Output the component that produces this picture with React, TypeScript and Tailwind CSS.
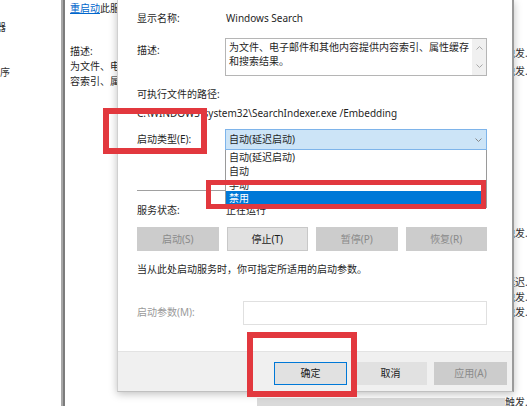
import React from 'react';

const font = "font-['Noto_Sans','Noto_Sans_CJK_SC',sans-serif]";

const rightRows = [
    { mt: 'mt-[46px]', text: '触发...' },
    { mt: 'mt-[3px]', text: '触发...' },
    { mt: 'mt-[147px]', text: '触发...' },
    { mt: 'mt-[34px]', text: '延迟...' },
    { mt: 'mt-0', text: '触发...' },
    { mt: 'mt-0', text: '触发...' },
    { mt: 'mt-[75px]', text: '触发...' },
];

function Chevron({ up = false, color = '#555' }: { up?: boolean; color?: string }) {
    return (
        <svg width="7" height="4" viewBox="0 0 7 4" className="block">
            <path d={up ? 'M0.5 3.5 L3.5 0.5 L6.5 3.5' : 'M0.5 0.5 L3.5 3.5 L6.5 0.5'} fill="none" stroke={color} strokeWidth="1" />
        </svg>
    );
}

function WinButton({ label, disabled = false, primary = false, className = '' }: { label: string; disabled?: boolean; primary?: boolean; className?: string }) {
    return (
        <div
            className={`flex items-center justify-center border text-[10px] ${
                disabled
                    ? 'bg-[#cccccc] border-[#cccccc] text-[#8a8a8a]'
                    : primary
                    ? 'bg-[#e1e1e1] border-[#0078d7] text-[#1a1a1a]'
                    : 'bg-[#e1e1e1] border-[#c8c8c8] text-[#1a1a1a]'
            } ${className}`}
        >
            {label}
        </div>
    );
}

export default function App() {
    return (
        <div className={`relative w-[527px] h-[406px] overflow-hidden bg-white text-[#1f1f1f] text-[10px] ${font}`}>
            {/* Background: services window */}
            <div className="flex h-full w-full">
                {/* left tree column */}
                <div className="w-[61px] shrink-0 overflow-hidden flex flex-col">
                    <div className="mt-[19px] h-[16px] leading-[16px] -ml-[24px] whitespace-nowrap text-[#333]">管理器</div>
                    <div className="mt-[29px] h-[16px] leading-[16px] -ml-[10px] whitespace-nowrap text-[#333]">程序</div>
                </div>
                {/* splitter */}
                <div className="w-[4px] shrink-0 flex">
                    <div className="w-[2px] bg-[#a8a8a8]" />
                    <div className="w-[2px] bg-[#7c7c7c]" />
                </div>
                {/* description panel */}
                <div className="w-[135px] shrink-0 pl-[5px] flex flex-col whitespace-nowrap">
                    <div className="h-[16px] leading-[16px]">
                        <span className="text-[#0066cc] underline">重启动</span>此服务
                    </div>
                    <div className="mt-[28px] h-[15px] leading-[15px]">描述:</div>
                    <div className="h-[15px] leading-[15px]">为文件、电子邮件和其他内容</div>
                    <div className="h-[14px] leading-[14px]">容索引、属性缓存和搜索结果。</div>
                </div>
                {/* list area */}
                <div className="w-[305px] shrink-0 flex flex-col">
                    <div className="flex-1" />
                    <div className="h-[8px] ml-[57px] bg-[#dadada]" />
                </div>
                {/* startup type column edge */}
                <div className="flex-1 flex flex-col whitespace-nowrap text-[#333]">
                    {rightRows.map((r, i) => (
                        <div key={i} className={`${r.mt} h-[15px] leading-[15px]`}>{r.text}</div>
                    ))}
                </div>
            </div>

            {/* Properties dialog */}
            <div className="absolute left-[117px] top-0 w-[397px] h-[392px] border-l border-r-2 border-b border-l-[#d0d0d0] border-r-[#9a9a9a] border-b-[#c0c0c0] shadow-[0_2px_8px_rgba(0,0,0,0.25)] flex flex-col bg-white">
                <div className="h-[352px] pl-[19px] flex flex-col border-b border-[#e3e3e3]">
                    <div className="w-[350px] flex flex-col">
                        {/* display name */}
                        <div className="mt-[8px] h-[20px] leading-[20px] flex">
                            <div className="w-[89px]">显示名称:</div>
                            <div>Windows Search</div>
                        </div>
                        {/* description */}
                        <div className="mt-[10px] h-[38px] flex">
                            <div className="w-[88px] pt-[2px] leading-[20px]">描述:</div>
                            <div className="flex-1 flex border border-[#b5b5b5]">
                                <div className="flex-1 pl-[3px] pt-[1px] leading-[14px]">
                                    为文件、电子邮件和其他内容提供内容索引、属性缓存
                                    <br />
                                    和搜索结果。
                                </div>
                                <div className="w-[14px] bg-[#f0f0f0] flex flex-col items-center justify-between py-[7px]">
                                    <Chevron up color="#a8a8a8" />
                                    <Chevron color="#a8a8a8" />
                                </div>
                            </div>
                        </div>
                        {/* path */}
                        <div className="mt-[9px] h-[18px] leading-[18px]">可执行文件的路径:</div>
                        <div className="h-[20px] leading-[20px] whitespace-nowrap">C:\WINDOWS\system32\SearchIndexer.exe /Embedding</div>
                        {/* startup type */}
                        <div className="mt-[6px] h-[21px] flex">
                            <div className="w-[88px] leading-[21px]">启动类型(E):</div>
                            <div className="flex-1 flex items-center justify-between border border-[#7eb4ea] bg-[#cce4f7] pl-[3px] pr-[4px]">
                                <span className="leading-[19px]">自动(延迟启动)</span>
                                <Chevron color="#888" />
                            </div>
                        </div>
                        {/* separator */}
                        <div className="mt-[40px] h-px bg-[#a0a0a0]" />
                        {/* status */}
                        <div className="mt-[9px] h-[20px] leading-[20px] flex">
                            <div className="w-[89px]">服务状态:</div>
                            <div>正在运行</div>
                        </div>
                        {/* service buttons */}
                        <div className="mt-[7px] h-[24px] grid grid-cols-4 gap-x-[8px]">
                            <WinButton label="启动(S)" disabled />
                            <WinButton label="停止(T)" />
                            <WinButton label="暂停(P)" disabled />
                            <WinButton label="恢复(R)" disabled />
                        </div>
                        <div className="mt-[8px] h-[20px] leading-[20px]">当从此处启动服务时，你可指定所适用的启动参数。</div>
                        {/* start params */}
                        <div className="mt-[22px] h-[24px] flex">
                            <div className="w-[106px] leading-[22px] text-[#9a9a9a]">启动参数(M):</div>
                            <div className="flex-1 border border-[#e0e0e0] bg-white" />
                        </div>
                    </div>
                </div>
                {/* footer */}
                <div className="flex-1 bg-[#f0f0f0] flex justify-end gap-[7px] pt-[10px] pr-[5px]">
                    <WinButton label="确定" primary className="w-[73px] h-[23px]" />
                    <WinButton label="取消" className="w-[73px] h-[23px] border-[#e1e1e1]" />
                    <WinButton label="应用(A)" disabled className="w-[73px] h-[23px]" />
                </div>

                {/* open dropdown list */}
                <div className="absolute left-[107px] top-[150px] w-[262px] h-[58px] bg-white border border-[#9a9a9a] border-t-0 flex flex-col">
                    <div className="h-[14px] leading-[14px] pl-[3px]">自动(延迟启动)</div>
                    <div className="h-[14px] leading-[14px] pl-[3px]">自动</div>
                    <div className="h-[13px] leading-[14px] pl-[3px]">手动</div>
                    <div className="h-[14px] leading-[14px] pl-[3px] bg-[#0078d7] text-white">禁用</div>
                </div>
            </div>

            {/* Red annotation boxes */}
            <div className="absolute left-[103px] top-[108px] w-[104px] h-[46px] border-[6px] border-[#e2383e]" />
            <div className="absolute left-[206px] top-[180px] w-[280px] h-[29px] border-[5px] border-[#e2383e]" />
            <div className="absolute left-[247px] top-[332px] w-[110px] h-[65px] border-[6px] border-[#e2383e]" />
        </div>
    );
}
